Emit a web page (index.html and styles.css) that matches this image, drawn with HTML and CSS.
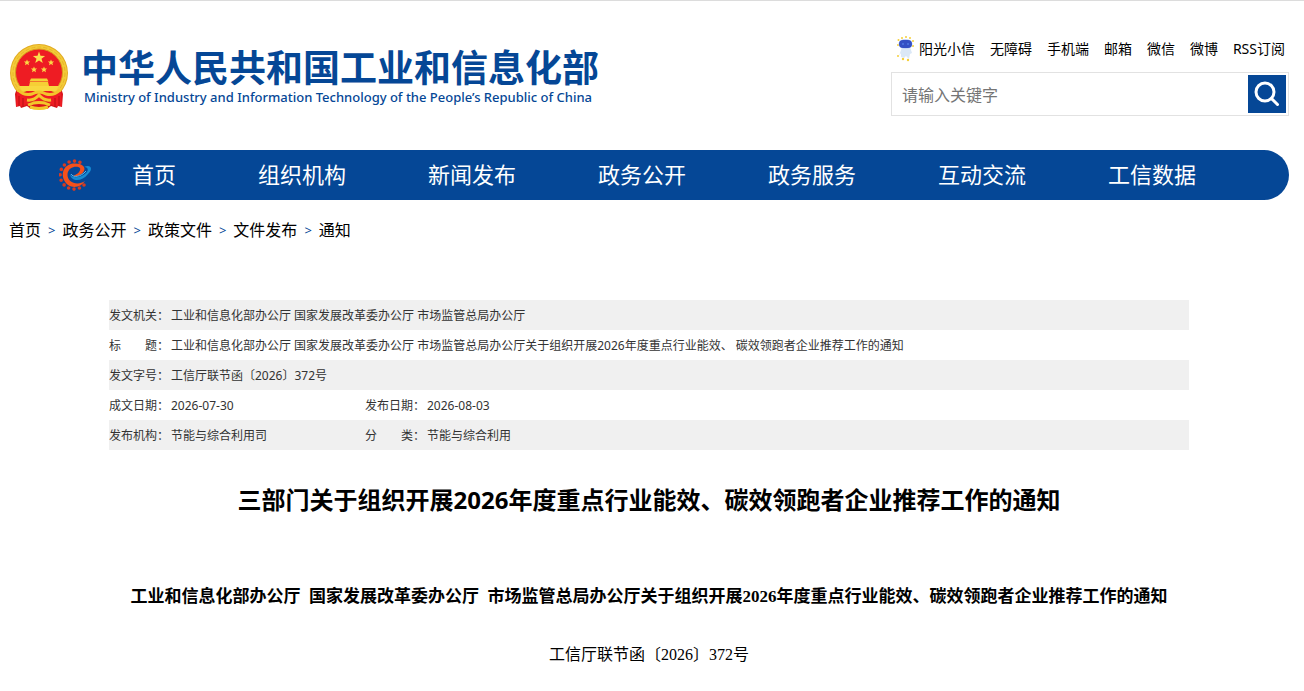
FILE: index.html
```html
<!DOCTYPE html>
<html lang="zh-CN">

  <head>
    <meta charset="UTF-8">
    <meta name="viewport" content="width=device-width, initial-scale=1.0">
    <title>三部门关于组织开展2026年度重点行业能效、碳效领跑者企业推荐工作的通知</title>
    <link rel="stylesheet" href="styles.css">
  </head>

  <body>
    <header class="header">
      <a class="logo" href="#">
        <svg class="emblem" viewBox="0 0 60 66" aria-hidden="true">
          <path d="M8 44 L52 44 L54 50 L53 63 L49 62 L48 64 L42 62 L38 65 L30 63 L22 65 L18 62 L12 64 L11 62 L7 63 L6 50 Z" fill="#d9151b"/>
          <circle cx="30" cy="29" r="29" fill="#e2ab22"/>
          <circle cx="30" cy="29" r="28" fill="#f3cb39"/>
          <circle cx="30" cy="29" r="26" fill="none" stroke="#e8b52a" stroke-width="1" stroke-dasharray="4 2"/>
          <circle cx="30" cy="28.500" r="23.500" fill="#ee1c23" stroke="#d99c1c" stroke-width="1"/>
          <path d="M30 7.500 l1.500 4.300 4.600 .1 -3.600 2.800 1.300 4.400 -3.800 -2.600 -3.800 2.600 1.300 -4.400 -3.600 -2.800 4.600 -.1z" fill="#fbe04e"/>
          <g fill="#fbd945">
            <path id="star" d="M18 15.500 l.9 2 2.200 .1 -1.700 1.400 .6 2.200 -2 -1.200 -2 1.200 .6 -2.200 -1.700 -1.400 2.200 -.1z"/>
            <use href="#star" x="24"/>
            <use href="#star" x="7" y="7"/>
            <use href="#star" x="17" y="7"/>
          </g>
          <path d="M22 34.500 h16 l1.500 3 h-19z M21 38 h18 l1 4 h-20z" fill="#f6cf35"/>
          <path d="M10 42 h40 l-3 5 h-34z" fill="#f8d83f"/>
          <path d="M8 48 L52 48 L53 62 L45 62 L38 57 L22 57 L15 62 L7 62 Z" fill="#ee1c23"/>
          <path d="M9 46 Q15 52 23 50 Q30 46 37 50 Q45 52 51 46" fill="none" stroke="#f3c62b" stroke-width="3"/>
          <path d="M18 56 Q25 57 30 51 Q35 57 42 56 M19 61 Q30 56 41 61 M21 63 Q30 66 39 63" fill="none" stroke="#f3c62b" stroke-width="3"/>
          <path d="M10 52 v10 M14 54 v9 M50 52 v10 M46 54 v9" stroke="#b80e14" stroke-width="1"/>
        </svg>
        <span class="logo-text">
          <span class="logo-cn">中华人民共和国工业和信息化部</span>
          <span class="logo-en">Ministry of Industry and Information Technology of the People’s Republic of China</span>
        </span>
      </a>

      <div class="header-right">
        <ul class="top-links">
          <li>
            <a class="robot-link" href="#">
              <svg class="robot" viewBox="0 0 18 26" aria-hidden="true">
                <g fill="#f5cf3a">
                  <circle cx="5" cy="2" r="1"/><circle cx="9" cy="1" r="1"/><circle cx="13" cy="2" r="1"/>
                  <circle cx="1.500" cy="4" r="1"/><circle cx="16" cy="5" r="1"/><circle cx="1" cy="9" r="1"/>
                  <circle cx="16" cy="10" r="1"/><circle cx="1" cy="20" r="1"/><circle cx="6" cy="23" r="1.200"/>
                  <circle cx="11" cy="24" r="1.200"/>
                </g>
                <path d="M5 11 L13 11 L15 17 L13 18 L12 23 L9 20 L7 22 L4 21 L4 17 L2 20 Z" fill="#dbe8f7"/>
                <ellipse cx="8.500" cy="8" rx="7" ry="5" fill="#c3d3f5"/>
                <rect x="2" y="4" width="13" height="8" rx="4" fill="#3450c4"/>
                <path d="M5 8 h2 M10 8 h2" stroke="#5a8cf0" stroke-width="1"/>
              </svg>
              阳光小信
            </a>
          </li>
          <li><a href="#">无障碍</a></li>
          <li><a href="#">手机端</a></li>
          <li><a href="#">邮箱</a></li>
          <li><a href="#">微信</a></li>
          <li><a href="#">微博</a></li>
          <li><a href="#">RSS订阅</a></li>
        </ul>
        <form class="search">
          <input class="search-input" type="text" placeholder="请输入关键字" aria-label="请输入关键字">
          <button class="search-btn" type="button" aria-label="搜索">
            <svg viewBox="0 0 38 38" fill="none" stroke="#fff" stroke-width="3" stroke-linecap="round">
              <circle cx="17" cy="17" r="9"/>
              <path d="M23.500 23.500 L29.500 29.500"/>
            </svg>
          </button>
        </form>
      </div>
    </header>

    <nav class="nav">
      <svg class="nav-icon" viewBox="0 0 32 32" aria-hidden="true">
        <path d="M25 26 A14 14 0 1 1 23 4.500" fill="none" stroke="#d63a22" stroke-width="3.600" stroke-linecap="round" stroke-dasharray="0 5.500"/>
        <path d="M26 22 C21 30 9 30 5 21 C1 11 8 4 16 4.500 C23 4.500 27 8 25 12 C23 16 18 18 14 17 C19 15 22 12 21 9 C18 6 9 8 8.500 15 C8 24 19 27 26 22Z" fill="#f5501b"/>
        <path d="M11 15 C13 20 22 19 27 14 C30 11 29 8 25 8 C31 5 35 9 29 15 C23 23 12 23 11 15Z" fill="#168bd2"/>
        <path d="M12 15 C14 19 22 18 27 12" fill="none" stroke="#5ab9ec" stroke-width="1"/>
      </svg>
      <a class="nav-home" href="#">首页</a>
      <a class="nav-item" href="#">组织机构</a>
      <a class="nav-item" href="#">新闻发布</a>
      <a class="nav-item" href="#">政务公开</a>
      <a class="nav-item" href="#">政务服务</a>
      <a class="nav-item" href="#">互动交流</a>
      <a class="nav-item" href="#">工信数据</a>
    </nav>

    <div class="crumbs">
      <a href="#">首页</a>
      <span class="sep">&gt;</span>
      <a href="#">政务公开</a>
      <span class="sep">&gt;</span>
      <a href="#">政策文件</a>
      <span class="sep">&gt;</span>
      <a href="#">文件发布</a>
      <span class="sep">&gt;</span>
      <a href="#">通知</a>
    </div>

    <main class="article">
      <table class="info">
        <colgroup>
          <col class="col-label">
          <col class="col-value">
          <col class="col-label">
          <col>
        </colgroup>
        <tr>
          <th>发文机关：</th>
          <td colspan="3">工业和信息化部办公厅 国家发展改革委办公厅 市场监管总局办公厅</td>
        </tr>
        <tr>
          <th>标　　题：</th>
          <td colspan="3">工业和信息化部办公厅 国家发展改革委办公厅 市场监管总局办公厅关于组织开展2026年度重点行业能效、 碳效领跑者企业推荐工作的通知</td>
        </tr>
        <tr>
          <th>发文字号：</th>
          <td colspan="3">工信厅联节函〔2026〕372号</td>
        </tr>
        <tr>
          <th>成文日期：</th>
          <td>2026-07-30</td>
          <th>发布日期：</th>
          <td>2026-08-03</td>
        </tr>
        <tr>
          <th>发布机构：</th>
          <td>节能与综合利用司</td>
          <th>分　　类：</th>
          <td>节能与综合利用</td>
        </tr>
      </table>

      <h1 class="title">三部门关于组织开展2026年度重点行业能效、碳效领跑者企业推荐工作的通知</h1>

      <div class="content">
        <p class="subtitle">工业和信息化部办公厅&nbsp; 国家发展改革委办公厅&nbsp; 市场监管总局办公厅关于组织开展2026年度重点行业能效、碳效领跑者企业推荐工作的通知</p>
        <p class="doc-no">工信厅联节函〔2026〕372号</p>
      </div>
    </main>
  </body>

</html>
```

FILE: styles.css
```css
:root {
  --blue: #054796;
  --sans: "Noto Sans", "Noto Sans CJK SC", sans-serif;
  --serif: "Liberation Serif", "Noto Sans CJK SC", serif;
}

* {
  box-sizing: border-box;
}

body {
  margin: 0;
  padding: 0 15px 0 9px;
  border-top: 1px solid #dcdcdc;
  font-family: var(--sans);
  color: #000;
  background: #fff;
}

a {
  color: inherit;
  text-decoration: none;
}

/* header */
.header {
  display: flex;
  justify-content: space-between;
  padding: 35px 0 34px;
}

.logo {
  display: flex;
  align-items: flex-start;
  gap: 12px;
  padding-top: 8px;
  color: var(--blue);
}

.emblem {
  width: 60px;
  height: 66px;
}

.logo-text {
  display: flex;
  flex-direction: column;
  padding-top: 3px;
  white-space: nowrap;
}

.logo-cn {
  font-size: 37px;
  line-height: 42px;
  font-weight: bold;
}

.logo-en {
  padding-left: 3px;
  font-size: 13px;
  font-weight: 500;
  line-height: 16px;
}

.header-right {
  width: 398px;
}

.top-links {
  display: flex;
  justify-content: flex-end;
  gap: 15px;
  margin: 0 0 10px;
  padding: 0 4px 0 0;
  list-style: none;
  font-size: 14px;
  line-height: 26px;
  white-space: nowrap;
}

.robot-link {
  display: flex;
  gap: 4px;
}

.robot {
  width: 18px;
  height: 26px;
}

.search {
  display: flex;
  align-items: center;
  height: 44px;
  padding: 2px;
  border: 1px solid #e2e2e2;
}

.search-input {
  flex: 1;
  min-width: 0;
  padding: 2px 8px 0;
  border: 0;
  outline: 0;
  font-family: var(--sans);
  font-size: 16px;
}

.search-input::placeholder {
  color: #757575;
}

.search-btn {
  width: 38px;
  height: 38px;
  padding: 0;
  border: 0;
  background: var(--blue);
  cursor: pointer;
}

.search-btn svg {
  display: block;
}

/* main navigation */
.nav {
  display: flex;
  align-items: center;
  height: 50px;
  padding: 0 52px 0 50px;
  border-radius: 25px;
  background: var(--blue);
  color: #fff;
  font-size: 22px;
  line-height: 48px;
  text-align: center;
  white-space: nowrap;
}

.nav a {
  height: 50px;
}

.nav-icon {
  width: 32px;
  height: 32px;
}

.nav-home {
  width: 126px;
}

.nav-item {
  flex: 1;
}

.crumbs {
  display: flex;
  gap: 7px;
  padding-top: 15px;
  font-size: 16px;
  line-height: 30px;
}

.sep {
  color: var(--blue);
  font-size: 13px;
}

/* article */
.article {
  padding: 55px 100px 0;
}

.info {
  width: 100%;
  table-layout: fixed;
  border-collapse: collapse;
  color: #333;
  font-size: 12px;
  line-height: 28px;
}

.info tr:nth-child(odd) {
  background: #f0f0f0;
}

.info th,
.info td {
  height: 30px;
  padding: 2px 0 0;
  font-weight: normal;
  text-align: left;
  white-space: nowrap;
}

.col-label {
  width: 62px;
}

.col-value {
  width: 194px;
}

.title {
  margin: 30px 0 0;
  font-size: 24px;
  line-height: 40px;
  text-align: center;
}

.content {
  padding-top: 62px;
  font-family: var(--serif);
  text-align: center;
}

.content p {
  margin: 0 0 28px;
  line-height: 30px;
}

.subtitle {
  font-size: 17px;
  font-weight: bold;
}

.doc-no {
  font-size: 16px;
}
```
